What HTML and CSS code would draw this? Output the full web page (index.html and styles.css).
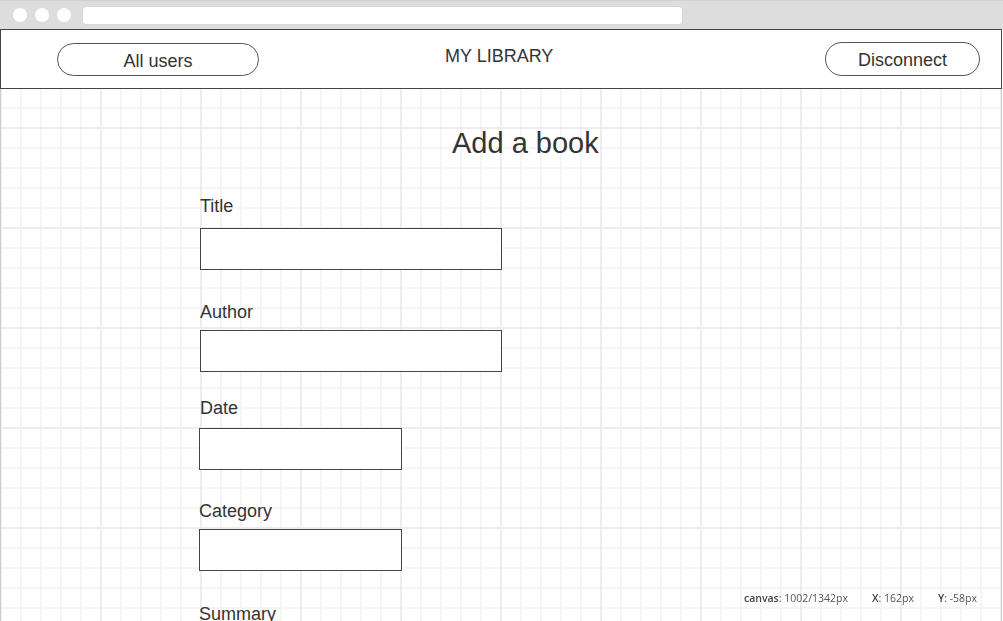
FILE: index.html
```html
<!DOCTYPE html>
<html lang="en">
<head>
<meta charset="utf-8">
<title>My Library - Add a book</title>
<link rel="stylesheet" href="styles.css">
</head>
<body>
<div class="chrome">
  <span class="dot"></span><span class="dot"></span><span class="dot"></span>
  <div class="urlbar"></div>
</div>
<header class="header">
  <a class="pill pill-users">All users</a>
  <div class="brand">MY LIBRARY</div>
  <a class="pill pill-disconnect">Disconnect</a>
</header>
<main class="canvas">
  <h1 class="page-title">Add a book</h1>
  <div class="field field-title">
    <label class="label">Title</label>
    <div class="input input-wide"></div>
  </div>
  <div class="field field-author">
    <label class="label">Author</label>
    <div class="input input-wide"></div>
  </div>
  <div class="field field-date">
    <label class="label">Date</label>
    <div class="input input-narrow"></div>
  </div>
  <div class="field field-category">
    <label class="label">Category</label>
    <div class="input input-narrow"></div>
  </div>
  <div class="field field-summary">
    <label class="label">Summary</label>
  </div>
</main>
<div class="status">
  <span><b>canvas</b>: 1002/1342px</span>
  <span><b>X</b>: 162px</span>
  <span><b>Y</b>: -58px</span>
</div>
</body>
</html>
```
FILE: styles.css
```css
* { box-sizing: border-box; }
html, body { margin: 0; padding: 0; overflow: hidden; height: 100%; }
body {
  font-family: "Liberation Sans", Arial, sans-serif;
  color: #333;
  background: #fff;
}
.chrome {
  height: 29px;
  width: 1003px;
  background: #dddddd;
  border-top: 1px solid #d0d0d0;
  display: flex;
  align-items: center;
  padding-left: 13px;
}
.dot {
  width: 14px;
  height: 14px;
  border-radius: 50%;
  background: #fff;
  margin-right: 8px;
}
.urlbar {
  margin-left: 3px;
  width: 601px;
  height: 19px;
  background: #fff;
  border-radius: 4px;
  border: 1px solid #d6d6d6;
}
.header {
  width: 1002px;
  height: 60px;
  border: 1px solid #444;
  background: #fff;
  display: flex;
  align-items: flex-start;
  padding: 0 21px 0 56px;
}
.pill {
  display: flex;
  align-items: center;
  justify-content: center;
  border: 1px solid #555;
  border-radius: 17px;
  font-size: 18px;
  line-height: 20px;
  color: #333;
  padding-top: 2px;
}
.pill-users { width: 202px; height: 33px; margin-top: 13px; }
.pill-disconnect { width: 155px; height: 34px; margin-top: 12px; margin-left: auto; }
.brand {
  margin-left: 186px;
  margin-top: 16px;
  font-size: 18px;
  line-height: 20px;
  color: #333;
}
.canvas {
  width: 1002px;
  height: calc(100vh - 89px);
  border-left: 1px solid #cfcfcf;
  border-right: 1px solid #cfcfcf;
  background-color: #fff;
  background-image:
    linear-gradient(to right, #ededed 2px, transparent 2px),
    linear-gradient(to bottom, #ededed 2px, transparent 2px),
    linear-gradient(to right, #f5f5f5 2px, transparent 2px),
    linear-gradient(to bottom, #f5f5f5 2px, transparent 2px);
  background-size: 100px 100px, 100px 100px, 20px 20px, 20px 20px;
  background-position: -1px 38px, -1px 38px, -1px 18px, -1px 18px;
  padding: 37px 0 0 198px;
}
.page-title {
  margin: 0 0 36px 253px;
  font-size: 29px;
  line-height: 34px;
  font-weight: normal;
  color: #333;
}
.label {
  display: block;
  font-size: 18px;
  line-height: 20px;
  color: #333;
}
.input {
  height: 42px;
  border: 1px solid #444;
  background: #fff;
}
.input-wide { width: 302px; margin-left: 1px; }
.input-narrow { width: 203px; }
.field-title .label { margin-left: 1px; }
.field-title .input { margin-top: 12px; }
.field-author { margin-top: 32px; }
.field-author .label { margin-left: 1px; }
.field-author .input { margin-top: 8px; }
.field-date { margin-top: 26px; }
.field-date .label { margin-left: 1px; }
.field-date .input { margin-top: 10px; }
.field-category { margin-top: 31px; }
.field-category .input { margin-top: 8px; }
.field-summary { margin-top: 33px; }
.status {
  position: fixed;
  right: 26px;
  bottom: 16px;
  display: flex;
  gap: 24px;
  font-family: "Open Sans", sans-serif;
  font-size: 10.5px;
  line-height: 14px;
  color: #555;
}
.status b { font-weight: 600; color: #444; }
```
